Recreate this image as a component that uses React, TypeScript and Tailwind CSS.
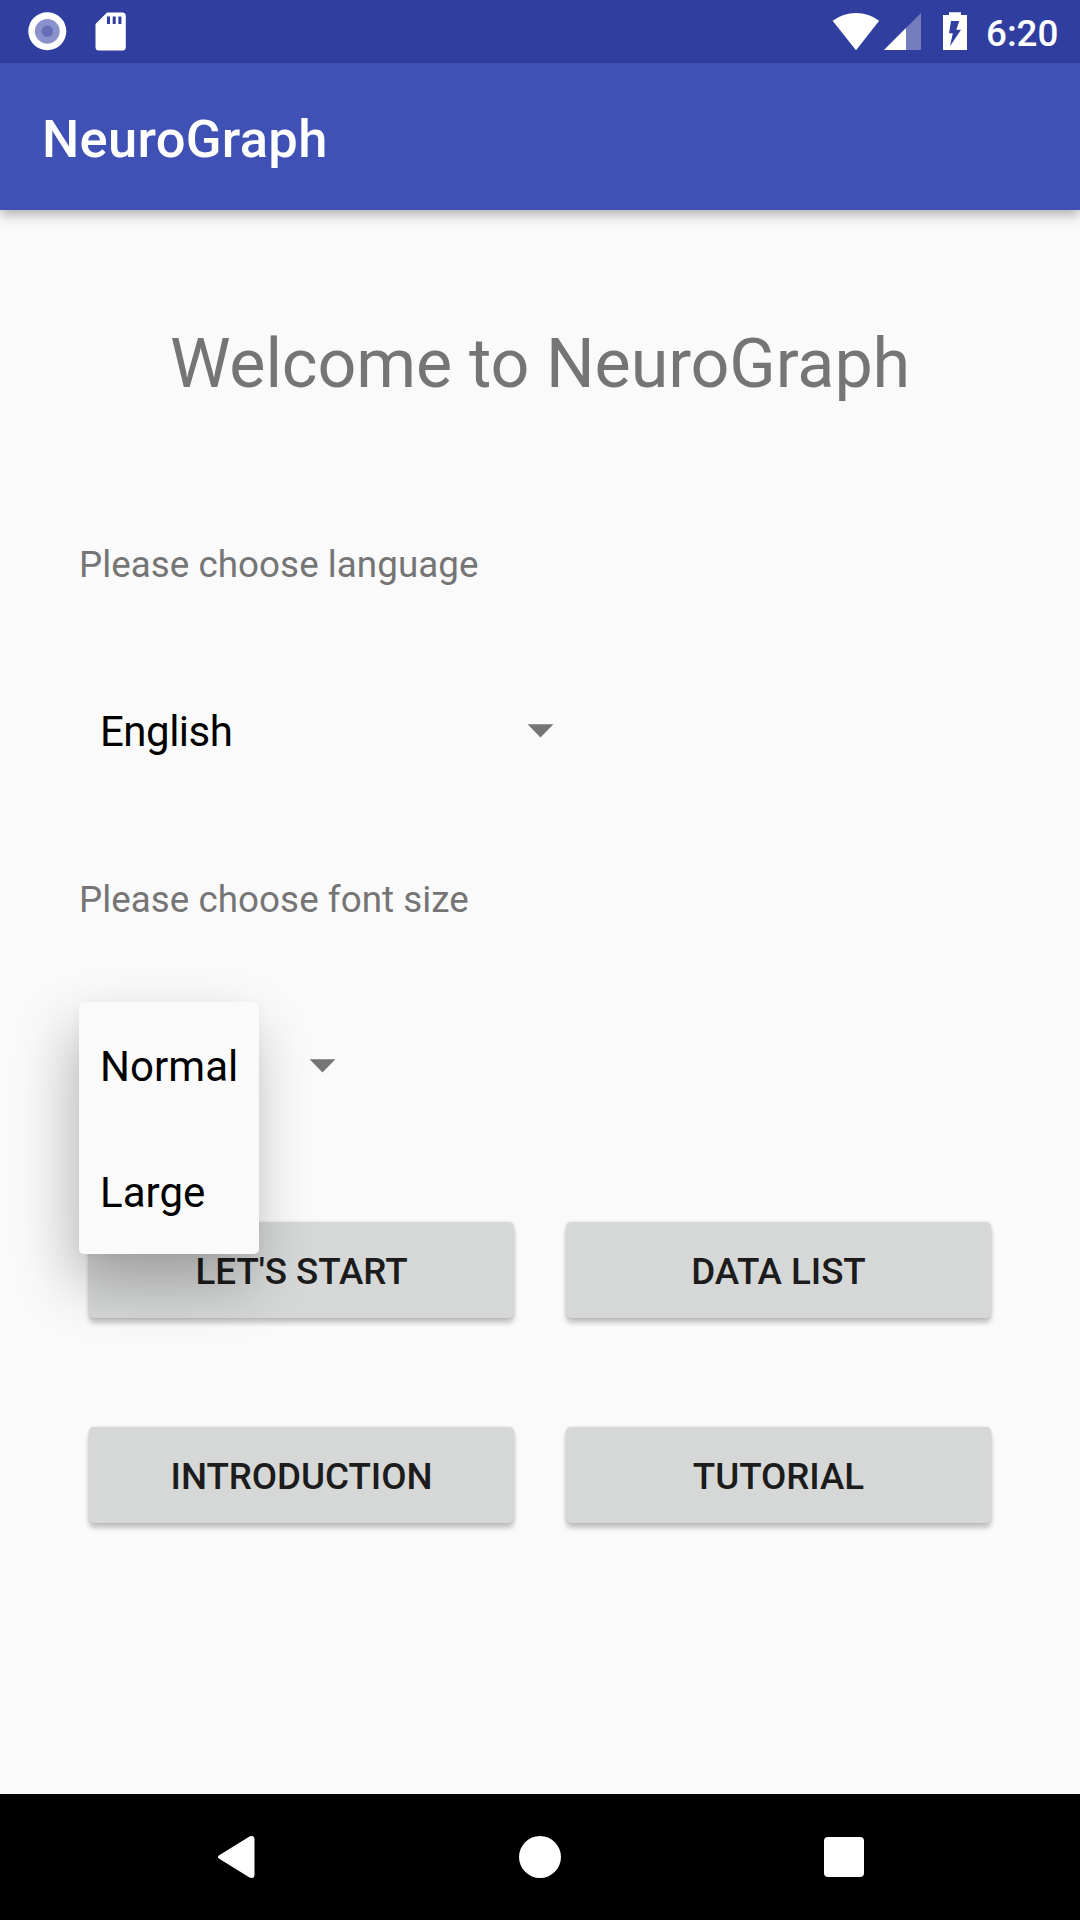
import { useState } from "react";

const SpinnerArrow = () => (
  <svg className="mb-[2px]" width="27" height="14" viewBox="0 0 27 14">
    <path d="M0.6 0.2H26.4L13.5 13.4Z" fill="#757575" />
  </svg>
);

function StatusBar() {
  return (
    <header className="flex h-[63px] items-center bg-[#303f9f]">
      <svg width="140" height="63" viewBox="0 0 140 63">
        <circle cx="47.3" cy="31.3" r="19" fill="#fff" />
        <circle cx="47.3" cy="31.3" r="12.4" fill="#8b92cb" />
        <circle cx="47.3" cy="31.3" r="5.7" fill="#666eb8" />
        <path
          fillRule="evenodd"
          fill="#fff"
          d="M107 12.5H122.300Q125.800 12.500 125.800 16V47Q125.800 50.500 122.300 50.500H99Q95.500 50.500 95.500 47V24ZM107 16.500V24H110V16.500ZM112.700 16.500V24H115.700V16.500ZM118.400 16.500V24H121.400V16.500Z"
        />
      </svg>
      <svg className="ml-auto" width="150" height="63" viewBox="830 0 150 63">
        <path d="M832.6 20.800Q843 13 856 13T879.200 20.800L856 50.200Z" fill="#fff" />
        <path d="M884 50L921 13V50Z" fill="#757dbd" />
        <path d="M884 50L906 28V50Z" fill="#fff" />
        <path
          fillRule="evenodd"
          fill="#fff"
          d="M949 12.200H961V15H967V50H943V15H949ZM951 21L949 33.200H952.800L950 46.200L961 29.800H956.300L959.300 21Z"
        />
      </svg>
      <span className="mt-[4px] w-[100px] pl-[6px] text-[36.75px] leading-[44px] font-medium text-white">
        6:20
      </span>
    </header>
  );
}

function NavBar() {
  return (
    <nav className="flex h-[126px] items-center justify-between bg-black px-[216px]">
      <svg width="40" height="44" viewBox="0 0 40 44">
        <path
          d="M3.200 20.200L33.500 1.400Q38.500 -0.300 38.500 4.500V39.500Q38.500 44.300 33.500 42.600L3.200 23.800Q0.600 22 3.200 20.200Z"
          fill="#fff"
        />
      </svg>
      <div className="size-[42px] rounded-full bg-white" />
      <div className="size-[40px] rounded-[4px] bg-white" />
    </nav>
  );
}

const ActionButton = ({ label }: { label: string }) => (
  <button className="h-[96px] w-[425px] rounded-[5px] bg-[#d6d8d7] pt-[3px] text-[36.75px] leading-[44px] font-medium tracking-[-0.05px] text-[#1c1c1c] shadow-[0_5px_5px_rgba(0,0,0,0.22),0_0_3px_rgba(0,0,0,0.12)]">
    {label}
  </button>
);

export default function App() {
  const [size, setSize] = useState("Normal");
  return (
    <div className="flex h-[1920px] w-[1080px] flex-col overflow-hidden bg-[#fafafa] font-['Roboto',sans-serif]">
      <StatusBar />
      <div className="flex h-[147px] shrink-0 items-center bg-[#3f51b5] pt-[4px] pl-[42px] shadow-[0_5px_11px_rgba(0,0,0,0.29)]">
        <h1 className="text-[52.5px] leading-[62px] font-medium tracking-[0.3px] text-white">
          NeuroGraph
        </h1>
      </div>

      <main className="flex flex-1 flex-col px-[79px] pt-[114px]">
        <h2 className="text-center text-[68.25px] leading-[80px] tracking-[-0.12px] text-[#757575]">
          Welcome to NeuroGraph
        </h2>

        <p className="mt-[139px] text-[36.75px] leading-[44px] tracking-[0.05px] text-[#757575]">
          Please choose language
        </p>
        <div className="mt-[103px] flex h-[84px] w-[475px] items-center justify-between pl-[21px]">
          <span className="text-[42px] leading-[50px] tracking-[-0.5px] text-black">English</span>
          <SpinnerArrow />
        </div>

        <p className="mt-[104px] text-[36.75px] leading-[44px] tracking-[0.05px] text-[#757575]">
          Please choose font size
        </p>
        <div className="relative mt-[103px] flex h-[84px] w-[257px] items-center justify-end">
          <SpinnerArrow />
          <ul className="absolute -top-[23px] left-0 w-[180px] rounded-[5px] bg-[#fafafa] shadow-[-7px_28px_60px_rgba(0,0,0,0.27),0_2px_8px_rgba(0,0,0,0.04)]">
            {["Normal", "Large"].map((option) => (
              <li
                key={option}
                aria-selected={option === size}
                onClick={() => setSize(option)}
                className="flex h-[126px] items-center pt-[4px] pl-[21px] text-[42px] leading-[50px] tracking-[0.05px] text-black"
              >
                {option}
              </li>
            ))}
          </ul>
        </div>

        <div className="mt-[113px] grid grid-cols-[425px_425px] gap-x-[52px] gap-y-[109px] pl-[10px]">
          <ActionButton label="LET'S START" />
          <ActionButton label="DATA LIST" />
          <ActionButton label="INTRODUCTION" />
          <ActionButton label="TUTORIAL" />
        </div>
      </main>

      <NavBar />
    </div>
  );
}
